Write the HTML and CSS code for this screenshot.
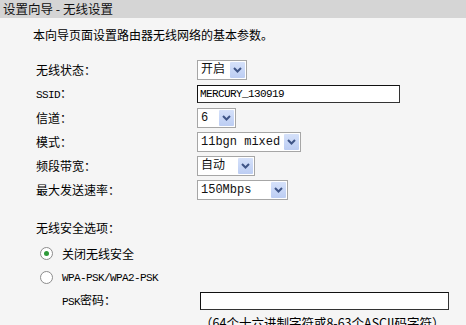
FILE: index.html
```html
<!DOCTYPE html>
<html lang="zh-CN">
<head>
<meta charset="utf-8">
<title>设置向导 - 无线设置</title>
<link rel="stylesheet" href="styles.css">
</head>
<body>
<div class="header">设置向导 - 无线设置</div>
<div class="content">
  <p class="intro">本向导页面设置路由器无线网络的基本参数。</p>
  <div class="form">
    <div class="row">
      <span class="label">无线状态：</span>
      <div class="select w50"><span class="val">开启</span><span class="btn"><svg width="9" height="6" viewBox="0 0 9 6"><path d="M1 1 L4.5 4.5 L8 1" fill="none" stroke="#3f5587" stroke-width="2"/></svg></span></div>
    </div>
    <div class="row">
      <span class="label"><span class="en">SSID</span>：</span>
      <div class="input ssid">MERCURY_130919</div>
    </div>
    <div class="row">
      <span class="label">信道：</span>
      <div class="select w39"><span class="val">6</span><span class="btn"><svg width="9" height="6" viewBox="0 0 9 6"><path d="M1 1 L4.5 4.5 L8 1" fill="none" stroke="#3f5587" stroke-width="2"/></svg></span></div>
    </div>
    <div class="row">
      <span class="label">模式：</span>
      <div class="select w104"><span class="val">11bgn mixed</span><span class="btn"><svg width="9" height="6" viewBox="0 0 9 6"><path d="M1 1 L4.5 4.5 L8 1" fill="none" stroke="#3f5587" stroke-width="2"/></svg></span></div>
    </div>
    <div class="row">
      <span class="label">频段带宽：</span>
      <div class="select w58"><span class="val">自动</span><span class="btn"><svg width="9" height="6" viewBox="0 0 9 6"><path d="M1 1 L4.5 4.5 L8 1" fill="none" stroke="#3f5587" stroke-width="2"/></svg></span></div>
    </div>
    <div class="row">
      <span class="label">最大发送速率：</span>
      <div class="select w91"><span class="val">150Mbps</span><span class="btn"><svg width="9" height="6" viewBox="0 0 9 6"><path d="M1 1 L4.5 4.5 L8 1" fill="none" stroke="#3f5587" stroke-width="2"/></svg></span></div>
    </div>
  </div>
  <p class="section">无线安全选项：</p>
  <div class="radio-row first"><span class="radio checked"></span><span>关闭无线安全</span></div>
  <div class="radio-row"><span class="radio"></span><span class="en">WPA-PSK/WPA2-PSK</span></div>
  <div class="psk-row">
    <span class="psk-label"><span class="en">PSK</span>密码：</span>
    <div class="input psk"></div>
  </div>
  <div class="hint">（64个十六进制字符或8-63个ASCII码字符）</div>
</div>
</body>
</html>
```
FILE: styles.css
```css
html, body {
  margin: 0;
  padding: 0;
}
body {
  width: 466px;
  height: 325px;
  overflow: hidden;
  background: #f5f5f5;
  color: #000;
  font-family: "Noto Sans CJK SC", "Liberation Sans", sans-serif;
  font-size: 12px;
}
.header {
  height: 18px;
  line-height: 17px;
  padding-left: 3px;
  background: #d5d5d5;
  font-size: 12.5px;
  color: #111;
}
.content {
  padding-left: 33px;
}
.intro {
  margin: 10px 0 0;
  line-height: 14px;
}
.form {
  margin-top: 16px;
}
.row {
  display: flex;
  align-items: center;
  height: 24px;
}
.label {
  width: 164px;
  padding-left: 3px;
  box-sizing: border-box;
  line-height: 14px;
}
.en {
  font-family: "Liberation Mono", monospace;
  font-size: 11px;
  letter-spacing: -0.6px;
}
.select {
  display: flex;
  align-items: center;
  justify-content: space-between;
  height: 20px;
  box-sizing: border-box;
  border: 1px solid #a6a6a6;
  background: #fff;
  padding: 0 1px 0 3px;
}
.select .val {
  font-family: "Liberation Mono", "Noto Sans CJK SC", monospace;
  font-size: 12px;
  line-height: 16px;
  color: #111;
  white-space: pre;
}
.btn {
  display: flex;
  align-items: center;
  justify-content: center;
  width: 15px;
  height: 16px;
  background: linear-gradient(#d5e1fa, #bccdf3);
  border-radius: 1px;
}
.w50 { width: 50px; }
.w39 { width: 39px; }
.w104 { width: 104px; }
.w58 { width: 58px; }
.w91 { width: 91px; }
.input {
  height: 18px;
  box-sizing: border-box;
  background: #fff;
  border: 1px solid #333;
  border-top-color: #111;
  border-left-color: #111;
  font-family: "Liberation Mono", monospace;
  font-size: 11px;
  letter-spacing: -0.6px;
  line-height: 16px;
  padding-left: 2px;
}
.ssid { width: 203px; }
.section {
  margin: 19px 0 0;
  padding-left: 3px;
  line-height: 14px;
}
.radio-row {
  display: flex;
  align-items: center;
  height: 25px;
  padding-left: 7px;
  gap: 9px;
}
.radio-row.first {
  margin-top: 6px;
  height: 24px;
}
.radio {
  width: 13px;
  height: 13px;
  box-sizing: border-box;
  border: 1px solid #8c8c8c;
  border-radius: 50%;
  background: #fff;
  display: flex;
  align-items: center;
  justify-content: center;
}
.radio.checked::after {
  content: "";
  width: 5px;
  height: 5px;
  border-radius: 50%;
  background: #2f9a3a;
}
.psk-row {
  display: flex;
  align-items: center;
  height: 22px;
  padding-left: 29px;
}
.psk-label {
  width: 138px;
  line-height: 14px;
}
.psk { width: 249px; }
.hint {
  margin-top: 3px;
  padding-left: 167px;
  font-size: 12.5px;
  line-height: 16px;
  white-space: nowrap;
}
```
